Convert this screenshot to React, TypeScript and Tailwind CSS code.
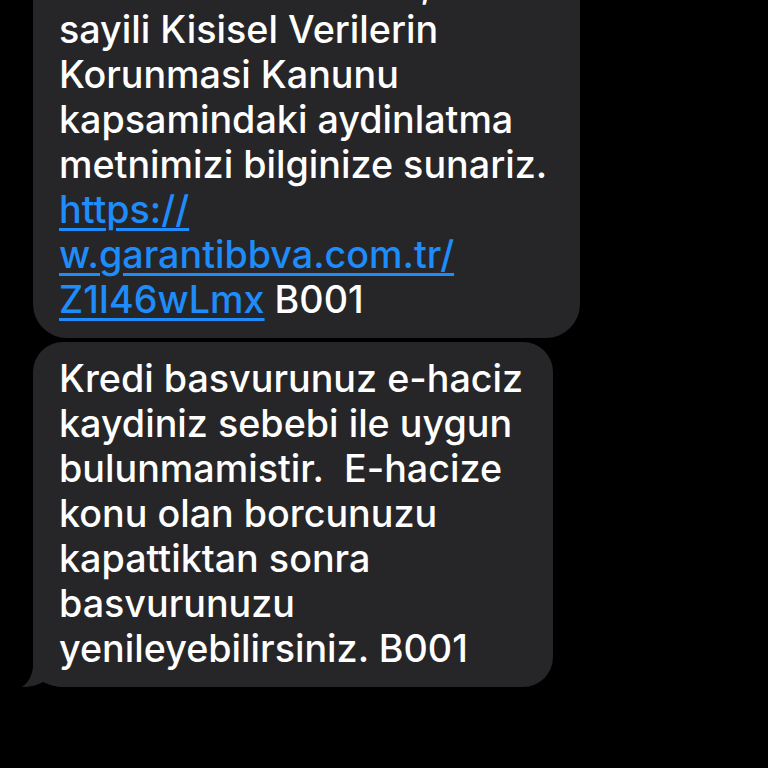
import React from "react";

const Link = ({ children }: { children: React.ReactNode }) => (
  <span className="text-[#1e8cfa] underline decoration-[3px] underline-offset-[5px]">{children}</span>
);

export default function App() {
  return (
    <div
      className="w-[768px] h-[768px] bg-black overflow-hidden text-white"
      style={{ fontFamily: "Inter, 'Noto Sans', sans-serif" }}
    >
      <div className="flex flex-col gap-[4px] pl-[33px] mt-[-52px]">
        <div className="w-[547px] bg-[#262628] rounded-[34px] pl-[26px] pr-[14px] pt-[14px] pb-[16px] text-[37.7px] font-medium leading-[45px]">
          <div>Garanti BBVA olarak, 6698</div>
          <div>sayili Kisisel Verilerin</div>
          <div>Korunmasi Kanunu</div>
          <div>kapsamindaki aydinlatma</div>
          <div>metnimizi bilginize sunariz.</div>
          <div><Link>https://</Link></div>
          <div><Link>w.garantibbva.com.tr/</Link></div>
          <div><Link>Z1I46wLmx</Link> B001</div>
        </div>
        <div className="relative w-[520px] bg-[#262628] rounded-[30px] pl-[26px] pr-[14px] pt-[14px] pb-[16px] text-[37.7px] font-medium leading-[45px]">
          <svg className="absolute left-[-11px] bottom-0 z-0" width="44" height="44" viewBox="0 0 44 44">
            <path d="M11 0 L11 22 C11 32 6 40 0 44 C8 44 16 42 21 39 C27 42 35 44 44 44 L44 0 Z" fill="#262628" />
          </svg>
          <div className="relative z-10">
            <div>Kredi basvurunuz e-haciz</div>
            <div>kaydiniz sebebi ile uygun</div>
            <div>bulunmamistir.&nbsp; E-hacize</div>
            <div>konu olan borcunuzu</div>
            <div>kapattiktan sonra</div>
            <div>basvurunuzu</div>
            <div>yenileyebilirsiniz. B001</div>
          </div>
        </div>
      </div>
    </div>
  );
}
